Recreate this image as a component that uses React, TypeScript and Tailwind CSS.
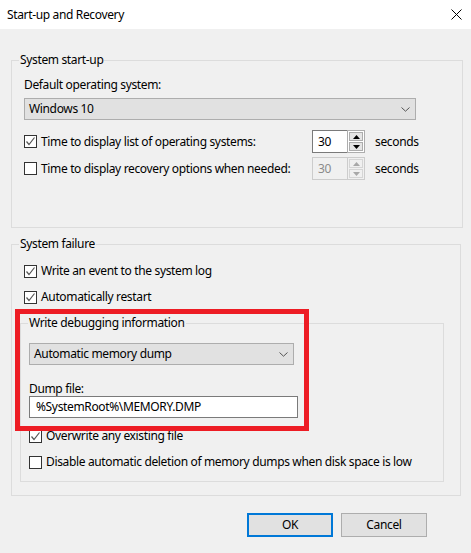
import React from "react";

const Check = ({ checked }: { checked: boolean }) => (
  <span className="w-[13px] h-[13px] border border-[#333333] bg-white flex items-center justify-center shrink-0">
    {checked && (
      <svg width="11" height="11" viewBox="0 0 11 11">
        <path d="M1.5 5.5 L4 8.5 L9.5 1.5" fill="none" stroke="#555555" strokeWidth="1.2" />
      </svg>
    )}
  </span>
);

const CheckRow = ({ checked, label, className = "" }: { checked: boolean; label: string; className?: string }) => (
  <div className={"flex items-center h-[16px] gap-[4px] " + className}>
    <Check checked={checked} />
    <span className="leading-[16px] whitespace-nowrap">{label}</span>
  </div>
);

const Chevron = () => (
  <svg width="9" height="5" viewBox="0 0 9 5">
    <path d="M0.5 0.5 L4.5 4.2 L8.5 0.5" fill="none" stroke="#555555" strokeWidth="1" />
  </svg>
);

const Select = ({ value, className = "" }: { value: string; className?: string }) => (
  <div className={"h-[22px] bg-[#e1e1e1] border border-[#adadad] flex items-center justify-between pl-[4px] pr-[5px] " + className}>
    <span className="leading-[16px]">{value}</span>
    <Chevron />
  </div>
);

const Tri = ({ up, color }: { up: boolean; color: string }) => (
  <svg width="7" height="4" viewBox="0 0 7 4">
    <path d={up ? "M0 4 L3.5 0 L7 4 Z" : "M0 0 L3.5 4 L7 0 Z"} fill={color} />
  </svg>
);

const Spin = ({ disabled }: { disabled?: boolean }) => (
  <div className="flex h-[23px] w-[53px] shrink-0">
    <div
      className={
        "w-[35px] h-full border border-r-0 flex items-center pl-[5px] leading-[16px] " +
        (disabled ? "border-[#cccccc] bg-[#f0f0f0] text-[#8a8a8a]" : "border-[#7a7a7a] bg-white text-black")
      }
    >
      30
    </div>
    <div
      className={
        "w-[18px] h-full border flex flex-col gap-px p-px " +
        (disabled ? "border-[#cccccc] bg-[#f0f0f0]" : "border-[#adadad] bg-white")
      }
    >
      <div
        className={
          "flex-1 border flex items-center justify-center " +
          (disabled ? "border-[#d5d5d5] bg-[#f0f0f0]" : "border-[#adadad] bg-[#e5e5e5]")
        }
      >
        <Tri up color={disabled ? "#a8a8a8" : "#000000"} />
      </div>
      <div
        className={
          "flex-1 border flex items-center justify-center " +
          (disabled ? "border-[#d5d5d5] bg-[#f0f0f0]" : "border-[#adadad] bg-[#e5e5e5]")
        }
      >
        <Tri up={false} color={disabled ? "#a8a8a8" : "#000000"} />
      </div>
    </div>
  </div>
);

export default function App() {
  return (
    <div
      className="relative w-[471px] h-[553px] bg-[#f0f0f0] text-[12px] tracking-[-0.35px] text-black overflow-hidden"
      style={{ fontFamily: '"Noto Sans", "Open Sans", sans-serif' }}
    >
      {/* title bar */}
      <div className="h-[29px] bg-white flex items-center justify-between pl-[7px] pr-[8px]">
        <span className="leading-[16px]">Start-up and Recovery</span>
        <svg width="11" height="11" viewBox="0 0 11 11" className="mr-[1px]">
          <path d="M0.5 0.5 L10.5 10.5 M10.5 0.5 L0.5 10.5" stroke="#000000" strokeWidth="1" />
        </svg>
      </div>

      <div className="pl-[11px] w-[461px] pt-[23px]">
        {/* System start-up */}
        <fieldset className="border border-[#dcdcdc] pl-[12px] pr-[43px] pb-[47px]">
          <legend className="ml-[-5px] px-[1px] leading-[16px]">System start-up</legend>
          <div className="mt-[9px] leading-[16px]">Default operating system:</div>
          <Select value="Windows 10" className="mt-[5px] w-[392px]" />
          <div className="mt-[10px] flex items-center h-[23px]">
            <div className="w-[288px] flex items-center gap-[4px]">
              <Check checked />
              <span className="whitespace-nowrap leading-[16px]">Time to display list of operating systems:</span>
            </div>
            <Spin />
            <span className="ml-[10px] leading-[16px]">seconds</span>
          </div>
          <div className="mt-[4px] flex items-center h-[23px]">
            <div className="w-[288px] flex items-center gap-[4px]">
              <Check checked={false} />
              <span className="whitespace-nowrap leading-[16px]">Time to display recovery options when needed:</span>
            </div>
            <Spin disabled />
            <span className="ml-[10px] leading-[16px]">seconds</span>
          </div>
        </fieldset>

        {/* System failure */}
        <fieldset className="mt-[8px] border border-[#dcdcdc] pl-[12px] pr-[16px] pb-[13px]">
          <legend className="ml-[-5px] px-[1px] leading-[16px]">System failure</legend>
          <CheckRow checked label="Write an event to the system log" className="mt-[11px]" />
          <CheckRow checked label="Automatically restart" className="mt-[10px]" />
          <fieldset className="mt-[10px] ml-[-4px] w-[424px] border border-[#dcdcdc] pl-[8px] pb-[11px]">
            <legend className="ml-[-1px] px-[1px] leading-[16px]">Write debugging information</legend>
            <Select value="Automatic memory dump" className="mt-[12px] w-[265px]" />
            <div className="mt-[17px] leading-[14px]">Dump file:</div>
            <div className="h-[22px] w-[269px] bg-white border border-[#7a7a7a] flex items-center pl-[6px] leading-[16px]">
              %SystemRoot%\MEMORY.DMP
            </div>
            <CheckRow checked label="Overwrite any existing file" className="mt-[10px]" />
            <CheckRow checked={false} label="Disable automatic deletion of memory dumps when disk space is low" className="mt-[10px]" />
          </fieldset>
        </fieldset>
      </div>

      {/* buttons */}
      <div className="flex justify-end gap-[8px] pr-[44px] mt-[17px]">
        <button className="w-[86px] h-[24px] bg-[#e1e1e1] border-2 border-[#0078d7] leading-[16px]">OK</button>
        <button className="w-[86px] h-[24px] bg-[#e1e1e1] border border-[#adadad] leading-[16px]">Cancel</button>
      </div>

      {/* red annotation box */}
      <div className="absolute left-[15px] top-[309px] w-[294px] h-[122px] border-[5px] border-[#ed1c24]" />
    </div>
  );
}
